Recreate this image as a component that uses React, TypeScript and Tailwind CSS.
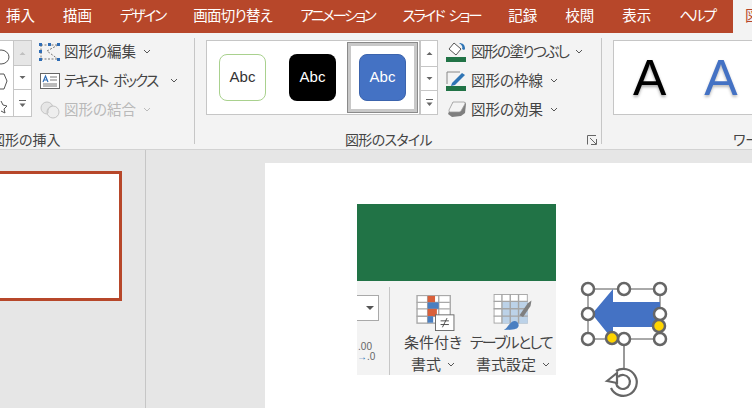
import type { ReactNode } from 'react'

const tabs = [
  { label: '挿入', cls: '' },
  { label: '描画', cls: '' },
  { label: 'デザイン', cls: 'tracking-[-2px]' },
  { label: '画面切り替え', cls: 'tracking-[-0.7px]' },
  { label: 'アニメーション', cls: 'tracking-[-2.3px]' },
  { label: 'スライド\u2002ショー', cls: 'tracking-[-2.2px]' },
  { label: '記録', cls: '' },
  { label: '校閲', cls: '' },
  { label: '表示', cls: '' },
  { label: 'ヘルプ', cls: 'tracking-[-2px]' },
]

function Chevron({ className = 'text-[#555]' }: { className?: string }) {
  return (
    <svg width="8" height="5" viewBox="0 0 8 5" className={className}>
      <path d="M1 1l3 3 3-3" fill="none" stroke="currentColor" strokeWidth="1" />
    </svg>
  )
}

function ScrollButton({ kind, disabled, h }: { kind: 'up' | 'down' | 'more'; disabled?: boolean; h: string }) {
  const color = disabled ? '#c0c0c0' : '#666'
  return (
    <div className={`${h} flex items-center justify-center border-b border-[#c6c6c6] last:border-b-0 ${disabled ? 'bg-[#e6e6e6]' : 'bg-white'}`}>
      <svg width="9" height="9" viewBox="0 0 9 9">
        {kind === 'up' && <path d="M1.5 6h6L4.5 3z" fill={color} />}
        {kind === 'down' && <path d="M1.5 3h6L4.5 6z" fill={color} />}
        {kind === 'more' && (
          <>
            <path d="M1 1.5h7" stroke={color} strokeWidth="1" />
            <path d="M1.5 4.5h6L4.5 8z" fill={color} />
          </>
        )}
      </svg>
    </div>
  )
}

function Scroller() {
  return (
    <div className="w-[18px] flex flex-col border border-[#c6c6c6] bg-white">
      <ScrollButton kind="up" h="h-[26px]" />
      <ScrollButton kind="down" h="h-[24px]" />
      <ScrollButton kind="more" h="flex-1" />
    </div>
  )
}

function EditIcon() {
  return (
    <svg width="21" height="18" viewBox="0 0 21 18">
      <path d="M2 2h17M2 2v14M2 16h17M19 2L8 8l11 8" fill="none" stroke="#777" strokeWidth="1" strokeDasharray="2 1.5" />
      <g fill="#2f6db5">
        <rect x="0" y="0" width="3" height="3" />
        <rect x="9" y="0" width="3" height="3" />
        <rect x="18" y="0" width="3" height="3" />
        <rect x="0" y="7" width="3" height="3" />
        <rect x="0" y="15" width="3" height="3" />
        <rect x="18" y="15" width="3" height="3" />
      </g>
    </svg>
  )
}

function TextBoxIcon() {
  return (
    <svg width="20" height="16" viewBox="0 0 20 16">
      <rect x="0.5" y="0.5" width="19" height="15" fill="#fff" stroke="#666" />
      <path d="M3 9l2.5-6 2.5 6M4 7h3" fill="none" stroke="#2f6db5" strokeWidth="1.2" />
      <path d="M10 4h7M10 7h7M3 11h14M3 13h14" stroke="#777" strokeWidth="1" />
    </svg>
  )
}

function MergeIcon() {
  return (
    <svg width="20" height="18" viewBox="0 0 20 18">
      <circle cx="7" cy="7" r="6" fill="#e6e6e6" stroke="#c4c4c4" />
      <circle cx="13" cy="11" r="6" fill="#eeeeee" stroke="#c4c4c4" />
      <path d="M8 12a6 6 0 0 1 4-7" fill="none" stroke="#c4c4c4" />
    </svg>
  )
}

function FillIcon() {
  return (
    <svg width="21" height="20" viewBox="0 0 21 20">
      <path d="M8 1l7 6-5 6-7-6z" fill="#fff" stroke="#555" strokeWidth="1" />
      <path d="M13 1c4 0 6 2 6 6l-1 1-2-1c1-2 0-4-3-6z" fill="#2f75b5" />
      <rect x="0" y="15" width="20" height="5" fill="#217346" />
    </svg>
  )
}

function OutlineIcon() {
  return (
    <svg width="21" height="20" viewBox="0 0 21 20">
      <path d="M1 13V1h13" fill="none" stroke="#888" strokeWidth="1" />
      <path d="M6 12L16 2l3 2L9 14l-4 1z" fill="#2f75b5" />
      <rect x="0" y="15" width="20" height="5" fill="#217346" />
    </svg>
  )
}

function EffectIcon() {
  return (
    <svg width="20" height="17" viewBox="0 0 20 17">
      <path d="M6 1h12l1 2-1 9-4 3-9 1-4-3z" fill="#7f7f7f" />
      <path d="M6 1h11c1 0 1 1 1 2l-4 7c-1 1-2 1-3 1H3c-1 0-1-1-1-2z" fill="#f4f4f4" stroke="#999" strokeWidth="0.8" />
    </svg>
  )
}

function Command({ icon, label, dim, chevronGap, tracking = '' }: { icon: ReactNode; label: string; dim?: boolean; chevronGap: string; tracking?: string }) {
  return (
    <div className="h-[29px] flex items-center">
      <div className="w-[21px] flex justify-center">{icon}</div>
      <span className={`ml-[4px] -mt-[1px] text-[14.5px] leading-none whitespace-nowrap ${tracking} ${dim ? 'text-[#b9b9b9]' : 'text-[#444]'}`}>{label}</span>
      <div className={chevronGap}>
        <Chevron className={dim ? 'text-[#bbb]' : 'text-[#555]'} />
      </div>
    </div>
  )
}

function Preset({ box, text, ml }: { box: string; text: string; ml: string }) {
  return (
    <div className={`${ml} w-[47px] h-[47px] shrink-0 rounded-[8px] flex items-center justify-center ${box}`}>
      <span className={`text-[15px] font-['Liberation_Sans',sans-serif] ${text}`}>Abc</span>
    </div>
  )
}

function ShapeStubs() {
  return (
    <svg width="14" height="76" viewBox="0 0 14 76">
      <ellipse cx="1" cy="14" rx="8" ry="7" fill="#fff" stroke="#555" />
      <path d="M-2 31h6l3 7-3 8h-6" fill="#fff" stroke="#555" />
      <path d="M1 58l2 4 4 1-3 3 1 4-4-2" fill="#fff" stroke="#555" />
    </svg>
  )
}

function Arrow() {
  return (
    <svg width="96" height="120" viewBox="0 0 96 120" className="absolute left-[315px] top-[116px]">
      <path d="M8 10h72v50H8z" fill="none" stroke="#555" strokeWidth="1" />
      <path d="M12 35L33 10v13h47v25H33v13z" fill="#4472c4" />
      <path d="M44 60v29" stroke="#555" strokeWidth="1.2" />
      {[
        [8, 10],
        [44, 10],
        [80, 10],
        [8, 35],
        [80, 35],
        [8, 60],
        [44, 60],
        [80, 60],
      ].map(([x, y]) => (
        <circle key={`${x}-${y}`} cx={x} cy={y} r="6" fill="#fff" stroke="#666" strokeWidth="2.5" />
      ))}
      <circle cx="32" cy="59" r="6" fill="#ffd500" stroke="#666" strokeWidth="2.5" />
      <circle cx="79" cy="47" r="6" fill="#ffd500" stroke="#666" strokeWidth="2.5" />
      <g fill="none" stroke="#666" strokeWidth="2.2">
        <path d="M36 92A13.5 13.5 0 1 1 31 109" />
        <path d="M38 98A7 7 0 1 1 36 104" />
        <path d="M27 102L37 94V104z" fill="#fff" />
      </g>
    </svg>
  )
}

function PastedImage() {
  return (
    <div className="absolute left-[92px] top-[41px] w-[199px] h-[171px] flex flex-col overflow-hidden bg-[#f3f3f3]">
      <div className="h-[77px] shrink-0 bg-[#217346]" />
      <div className="flex-1 flex min-h-0">
        <div className="w-[33px] shrink-0 flex flex-col border-r border-[#c6c6c6] mt-[6px]">
          <div className="mt-[8px] w-[22px] h-[26px] bg-white border-y border-r border-[#a9a9a9] flex items-center justify-end pr-[4px]">
            <svg width="8" height="5" viewBox="0 0 8 5">
              <path d="M0 0h8L4 4z" fill="#555" />
            </svg>
          </div>
          <div className="mt-[21px] text-[10px] leading-[10px] text-[#666] text-right pr-[17px] font-['Liberation_Sans',sans-serif] whitespace-nowrap">
            <div>.00</div>
            <div><span className="text-[#2f75b5]">→</span>.0</div>
          </div>
        </div>
        <div className="flex-1 flex text-[15px] leading-[22px] text-[#444] text-center">
          <div className="w-[80px] shrink-0 flex flex-col items-center pt-[14px] pl-[6px]">
            <svg width="41" height="39" viewBox="0 0 41 39" className="ml-[4px]">
              <g stroke="#a9a9a9" strokeWidth="1.5" fill="#fff">
                <rect x="0.5" y="0.5" width="36" height="30" />
                <path d="M12 0v31M24 0v31M0 8h36M0 15h36M0 23h36" />
              </g>
              <rect x="12" y="1" width="8" height="7" fill="#d9603b" />
              <rect x="12" y="8" width="12" height="7" fill="#4a7fc1" />
              <rect x="12" y="15" width="10" height="8" fill="#d9603b" />
              <rect x="12" y="23" width="6" height="7" fill="#4a7fc1" />
              <rect x="20.5" y="21.5" width="20" height="17" fill="#fff" stroke="#666" />
              <path d="M26 28h9M26 32h9M28 35l5-10" stroke="#444" fill="none" />
            </svg>
            <div className="whitespace-nowrap">条件付き</div>
            <div className="whitespace-nowrap flex items-center gap-[6px]">書式<Chevron /></div>
          </div>
          <div className="w-[86px] shrink-0 flex flex-col items-center pt-[13px]">
            <svg width="42" height="39" viewBox="0 0 42 39">
              <rect x="0.5" y="0.5" width="36" height="31" fill="#fff" stroke="#a5a5a5" />
              <rect x="9" y="8" width="28" height="24" fill="#bcd2e8" />
              <path d="M9 0v32M18 0v32M27 0v32M0 8h37M0 16h37M0 24h37" stroke="#a5a5a5" strokeWidth="1.5" />
              <path d="M28 23l9-13 4-3-1 6-8 12z" fill="#7f7f7f" />
              <path d="M11 39c3-1 5-6 9-9 4-2 8 1 7 5-1 3-4 4-16 4z" fill="#4a7fc1" />
            </svg>
            <div className="mt-[1px] whitespace-nowrap tracking-[-1.7px] pr-[4px]">テーブルとして</div>
            <div className="whitespace-nowrap flex items-center gap-[6px]">書式設定<Chevron /></div>
          </div>
        </div>
      </div>
    </div>
  )
}

export default function App() {
  return (
    <div className="w-[752px] h-[408px] overflow-hidden bg-[#e6e6e6] flex flex-col font-['Noto_Sans_CJK_JP',sans-serif] [font-feature-settings:'palt']">
      <div className="h-[33px] shrink-0 bg-[#b7472a] flex items-center pl-[6px] text-white text-[14.5px] leading-none overflow-hidden">
        <div className="flex gap-[28px] w-[727px] shrink-0 pb-[2px]">
          {tabs.map((t) => (
            <span key={t.label} className={`whitespace-nowrap ${t.cls}`}>{t.label}</span>
          ))}
        </div>
        <div className="h-[33px] w-[19px] shrink-0 overflow-hidden bg-[#f3f3f3] text-[#b7472a] pl-[12px] pb-[2px] flex items-center whitespace-nowrap">図</div>
      </div>

      <div className="h-[117px] shrink-0 bg-[#f3f3f3] border-b border-[#d2d2d2] flex overflow-hidden">
        <div className="w-[194px] shrink-0 flex flex-col">
          <div className="flex h-[99px] pt-[7px]">
            <div className="w-[32px] h-[77px] flex border border-l-0 border-[#c6c6c6] bg-white shrink-0">
              <div className="w-[13px] overflow-hidden pt-[2px]"><ShapeStubs /></div>
              <div className="w-[18px] flex flex-col border-l border-[#c6c6c6]">
                <ScrollButton kind="up" disabled h="h-[25px]" />
                <ScrollButton kind="down" h="h-[24px]" />
                <ScrollButton kind="more" h="flex-1" />
              </div>
            </div>
            <div className="ml-[7px] -mt-[3px] flex flex-col">
              <Command icon={<EditIcon />} label="図形の編集" chevronGap="ml-[7px]" />
              <Command icon={<TextBoxIcon />} label={'テキスト\u2002ボックス'} tracking="tracking-[-1.7px]" chevronGap="ml-[12px]" />
              <Command icon={<MergeIcon />} label="図形の結合" dim chevronGap="ml-[7px]" />
            </div>
          </div>
          <div className="text-[14px] leading-none text-[#444] -ml-[9px] whitespace-nowrap">図形の挿入</div>
        </div>

        <div className="w-px h-[106px] mt-[5px] bg-[#c6c6c6] shrink-0" />

        <div className="w-[406px] shrink-0 flex flex-col pl-[11px] relative">
          <div className="flex h-[99px] pt-[7px]">
            <div className="w-[214px] h-[75px] bg-white border border-[#c6c6c6] flex items-center shrink-0">
              <Preset ml="ml-[12px]" box="bg-white border-[1.5px] border-[#a9d18e]" text="text-[#333]" />
              <Preset ml="ml-[23px]" box="bg-black" text="text-white" />
              <div className="ml-[11px] w-[71px] h-[71px] shrink-0 border border-[#8a8a8a] bg-[#c8c8c8] p-[3px]">
                <div className="w-full h-full bg-white flex items-center justify-center">
                  <Preset ml="" box="bg-[#4472c4] border border-[#3c64ad]" text="text-white" />
                </div>
              </div>
            </div>
            <div className="h-[75px] flex"><Scroller /></div>
            <div className="ml-[8px] -mt-[3px] flex flex-col">
              <Command icon={<FillIcon />} label="図形の塗りつぶし" tracking="tracking-[-1.5px]" chevronGap="ml-[7px]" />
              <Command icon={<OutlineIcon />} label="図形の枠線" chevronGap="ml-[7px]" />
              <Command icon={<EffectIcon />} label="図形の効果" chevronGap="ml-[7px]" />
            </div>
          </div>
          <div className="text-[14px] leading-none text-[#444] pl-[139px] tracking-[-0.7px] whitespace-nowrap">図形のスタイル</div>
          <svg width="10" height="10" viewBox="0 0 10 10" className="absolute right-[4px] top-[102px]">
            <path d="M0.5 9.5V0.5H9M9.5 9.5H4M9.5 9.5V4M3 3l6 6" fill="none" stroke="#666" strokeWidth="1" />
          </svg>
        </div>

        <div className="w-px h-[106px] mt-[5px] bg-[#c6c6c6] shrink-0" />

        <div className="flex-1 flex flex-col pl-[11px] overflow-hidden">
          <div className="h-[99px] pt-[7px]">
            <div className="w-[200px] h-[75px] bg-white border border-[#c6c6c6] flex items-center pl-[19px] gap-[38px] font-['Liberation_Sans',sans-serif] text-[50px] leading-none">
              <span className="text-black [text-shadow:0_2px_3px_#aaa]">A</span>
              <span className="text-[#4472c4] [text-shadow:0_2px_3px_#bbb]">A</span>
            </div>
          </div>
          <div className="text-[14px] leading-none text-[#444] pl-[120px] whitespace-nowrap">ワードアート</div>
        </div>
      </div>

      <div className="flex-1 flex min-h-0">
        <div className="w-[146px] shrink-0 border-r border-[#c6c6c6] pt-[21px]">
          <div className="w-[122px] h-[130px] bg-white border-[3px] border-l-0 border-[#b7472a]" />
        </div>
        <div className="flex-1 pt-[13px] pl-[119px]">
          <div className="relative w-full h-full bg-white">
            <PastedImage />
            <Arrow />
          </div>
        </div>
      </div>
    </div>
  )
}
